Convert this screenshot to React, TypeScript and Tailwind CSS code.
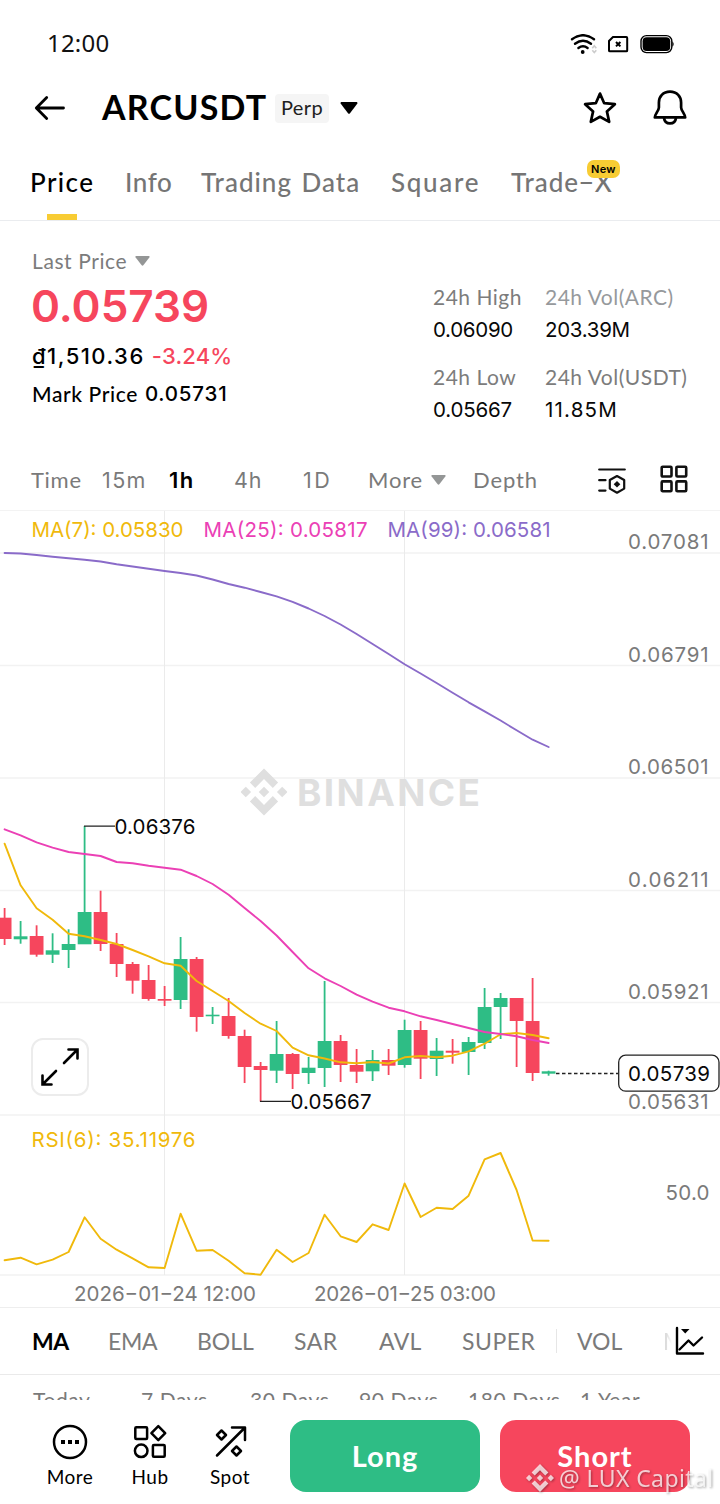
import type { ReactNode } from "react";

const LATO = "font-['Lato','Open_Sans',sans-serif]";
const INTER = "font-['Inter','Roboto',sans-serif]";

const GREEN = "#2ebd85";
const RED = "#f6465d";
const YELLOW = "#f0b90b";
const PINK = "#eb40b5";
const PURPLE = "#8a6bc9";

// [high, low, body top, body bottom, up]
const CANDLES: [number, number, number, number, boolean][] = [
  [908, 945, 917.7, 939, false],
  [921, 943.7, 936.3, 939.3, true],
  [925.3, 956.7, 936, 954.7, false],
  [933.3, 963, 950.3, 954.7, true],
  [929.3, 968, 944, 950, true],
  [826, 944, 912, 944.3, true],
  [890.7, 951, 912, 944, false],
  [933, 977, 944, 964, false],
  [962, 993.7, 964, 980.7, false],
  [965, 1000.7, 980, 999, false],
  [986, 1006, 999, 1000.7, false],
  [937, 1009, 959, 1000, true],
  [957, 1031.7, 959, 1017, false],
  [1007, 1024, 1014.7, 1016.3, true],
  [998, 1038.7, 1016, 1036, false],
  [1029.7, 1083, 1036, 1067, false],
  [1062, 1101.5, 1066, 1070, false],
  [1021, 1083, 1054, 1070.7, true],
  [1053, 1089, 1054, 1074, false],
  [1057, 1084, 1067.7, 1073, true],
  [981, 1087, 1041, 1068, true],
  [1035, 1082, 1041, 1065, false],
  [1049, 1083, 1065, 1071.7, false],
  [1050, 1081, 1060, 1071.3, true],
  [1049, 1075, 1060, 1065.7, false],
  [1019.7, 1067.7, 1030, 1065, true],
  [1021, 1079, 1030, 1058.7, false],
  [1038, 1076, 1050.7, 1059, true],
  [1039, 1063.7, 1050.7, 1052.7, false],
  [1037, 1075, 1042, 1052, true],
  [988, 1049, 1007, 1043, true],
  [993, 1039, 998, 1007, true],
  [998, 1067, 998, 1021, false],
  [978, 1081, 1021, 1073, false],
  [1070.7, 1075.7, 1071.3, 1073.7, true],
];

const MA7 = [
  843.7, 885.3, 908.3, 919.7, 933.7, 936.3, 940, 944, 950, 956.3, 963.3, 965.7,
  981, 991, 1001, 1013, 1023.7, 1031, 1047.7, 1055.3, 1058.5, 1062.3, 1063.3,
  1062, 1063.5, 1057.3, 1056, 1057.3, 1055.7, 1051.3, 1043.7, 1034.3, 1033,
  1035, 1038.3,
];

const MA25 = [
  829.3, 835.3, 842.3, 847.7, 852, 854, 856, 862, 863.3, 865.7, 867.7, 869.7,
  876, 884, 894.7, 908, 921, 935.5, 952, 968.3, 978.3, 986, 994.7, 1001.7,
  1007.7, 1011.3, 1016.3, 1020, 1024, 1028, 1032, 1034, 1036.3, 1040, 1043,
];

const MA99 = [
  553, 553.5, 555, 556.7, 558.3, 559.8, 561.5, 564.2, 566.5, 568.7, 571, 573,
  575.5, 579.5, 584, 587.7, 592, 596.3, 601.8, 608.5, 616, 624.5, 634, 644,
  654, 664.2, 673.5, 683, 692.7, 702.3, 711.3, 720.5, 730.3, 739.7, 747,
];

const RSI = [
  1260.3, 1257.7, 1264.3, 1259.7, 1252, 1217.3, 1238.7, 1249.7, 1258.3, 1267.3,
  1268, 1213.7, 1250.7, 1250, 1260.7, 1273.3, 1274.7, 1249.7, 1262, 1253,
  1214.7, 1236.3, 1242, 1224.3, 1230, 1183.5, 1217, 1207.7, 1209, 1195.7,
  1159.3, 1153, 1190, 1240.5, 1240.7,
];

const GRID_Y = [553, 665.5, 778, 890.5, 1002.5, 1115, 1275];

const PRICES = [
  { y: 549, value: "0.07081" },
  { y: 661.5, value: "0.06791" },
  { y: 774, value: "0.06501" },
  { y: 886.5, value: "0.06211" },
  { y: 999, value: "0.05921" },
  { y: 1109, value: "0.05631" },
];

const candleX = (i: number) => 4.6 + i * 16;
const toPoints = (values: number[]) =>
  values.map((y, i) => `${candleX(i)},${y}`).join(" ");

const BinanceMark = ({ className = "" }: { className?: string }) => (
  <svg viewBox="0 0 48 48" className={className} fill="currentColor">
    <path d="M24 0 38.4 14.4 33 19.8 24 10.8 15 19.8 9.6 14.4Z" />
    <path d="M24 48 38.4 33.6 33 28.2 24 37.2 15 28.2 9.6 33.6Z" />
    <path d="M24 18.6 29.4 24 24 29.4 18.6 24Z" />
    <path d="M5.4 18.6 10.8 24 5.4 29.4 0 24Z" />
    <path d="M42.6 18.6 48 24 42.6 29.4 37.2 24Z" />
  </svg>
);

const Caret = ({ className = "" }: { className?: string }) => (
  <svg viewBox="0 0 18 12" className={className} fill="currentColor">
    <path d="M1.2 0H16.8Q18 .6 17.2 1.8L10 11.2Q9 12.2 8 11.2L.8 1.8Q0 .6 1.2 0Z" />
  </svg>
);

const StatusBar = () => (
  <div className="flex h-[76px] items-center justify-between pt-3 pr-[46px] pl-[47px]">
    <span className="-mt-0.5 font-['Noto_Sans','Open_Sans',sans-serif] text-[24px] tracking-[0.2px] text-[#111]">
      12:00
    </span>
    <svg width="104" height="20" viewBox="570 34 104 20" fill="none">
      <g stroke="#000" strokeWidth="2.4" strokeLinecap="round">
        <path d="M572 39.2Q583 31.2 594 39.2" />
        <path d="M575 43.7Q583 37.6 591 43.7" />
        <path d="M578.4 48Q583 44.6 587.6 48" />
      </g>
      <circle cx="582.7" cy="52" r="1.9" fill="#000" />
      <path
        d="M592.3 48.2 594.3 45.8 596.3 48.2M592.3 50.2 594.3 52.6 596.3 50.2"
        stroke="#ccc"
        strokeWidth="1.6"
      />
      <path
        d="M613 37H626.3Q627.2 37 627.2 38V50.4Q627.2 51.3 626.3 51.3H610Q609 51.3 609 50.4V41Z"
        stroke="#000"
        strokeWidth="2"
      />
      <path d="M616 42 620.4 46.4M620.4 42 616 46.4" stroke="#000" strokeWidth="2" />
      <rect x="641" y="35.6" width="30.8" height="17" rx="5.5" stroke="#000" strokeWidth="1.4" />
      <rect x="642.6" y="37.2" width="27.6" height="13.8" rx="4" fill="#000" />
      <path d="M672.4 41.2Q675 44 672.4 46.8Z" fill="#000" />
    </svg>
  </div>
);

const Header = () => (
  <div className="flex h-16 items-center pr-8 pl-[34px]">
    <svg width="32" height="26" viewBox="0 0 32 26" fill="none" stroke="#000" strokeWidth="2.8" strokeLinecap="round" strokeLinejoin="round">
      <path d="M29.5 13H2.5M12.7 2.5 2.3 13 12.7 23.5" />
    </svg>
    <h1 className={`${LATO} -mt-0.5 ml-[36px] w-[173px] text-[34px] leading-none font-bold tracking-[1.2px] text-black`}>
      ARCUSDT
    </h1>
    <span className={`${LATO} flex h-[29px] w-[54px] items-center justify-center rounded bg-[#f5f5f5] pb-0.5 text-[20px] tracking-[0.4px] text-[#202020]`}>
      Perp
    </span>
    <Caret className="ml-[11px] h-3 w-[18px] text-black" />
    <div className="flex-1" />
    <svg width="36" height="36" viewBox="0 0 36 36" fill="none" stroke="#000" strokeWidth="2.7" strokeLinejoin="round">
      <path d="M18 3.6 22.2 13.2 32.9 14.2 24.9 21.4 27.2 31.9 18 26.8 8.8 31.9 11.1 21.4 3.1 14.2 13.8 13.2Z" />
    </svg>
    <svg className="ml-[34px]" width="36" height="36" viewBox="0 0 36 36" fill="none" stroke="#000" strokeWidth="2.7" strokeLinejoin="round">
      <path d="M18 1.6C11 1.6 6.9 6.8 6.9 12.5V17.4C6.9 20.5 2.8 24.3 2.8 27.4H33.2C33.2 24.3 29.1 20.5 29.1 17.4V12.5C29.1 6.8 25 1.6 18 1.6Z" />
      <path d="M12 28C12.4 31.2 14.8 33.4 18 33.4S23.6 31.2 24 28" />
    </svg>
  </div>
);

const Tabs = () => (
  <nav className={`${LATO} flex h-[81px] border-b border-[#eaecef] pl-[30px] text-[26px] leading-[84px] font-medium whitespace-nowrap text-[#757575]`}>
    <div className="relative w-[95px] tracking-[1.4px] text-black">
      Price
      <span className="absolute bottom-0 left-[17px] h-1.5 w-[30px] bg-[#f8cc33]" />
    </div>
    <div className="w-[76px] tracking-[0.6px]">Info</div>
    <div className="w-[190px] tracking-[1px] [word-spacing:2px]">Trading Data</div>
    <div className="w-[120px] tracking-[1.7px]">Square</div>
    <div className="relative tracking-[0.9px]">
      Trade−X
      <span className={`${INTER} absolute top-[20px] left-[76px] h-[18px] w-[33px] rounded-[7px] bg-[#f8cc33] text-center text-[11px] leading-[18px] font-semibold tracking-[0.3px] text-black`}>
        New
      </span>
    </div>
  </nav>
);

const Stat = ({ label, children, muted = false }: { label: ReactNode; children: ReactNode; muted?: boolean }) => (
  <div className="flex h-20 flex-col whitespace-nowrap">
    <span className={`${LATO} -mt-px h-[33px] text-[21px] leading-8 tracking-[0.5px] ${muted ? "text-[#96999c]" : "text-[#7c7c7c]"}`}>
      {label}
    </span>
    <span className={`${INTER} text-[20.5px] leading-8 text-[#080808]`}>{children}</span>
  </div>
);

const Summary = () => (
  <section className="flex h-[229px] justify-between pr-8 pl-8">
    <div className="flex flex-col whitespace-nowrap">
      <div className={`${LATO} mt-6 flex h-8 items-center text-[21px] tracking-[0.6px] text-[#7c7c7c]`}>
        Last Price
        <Caret className="ml-2 h-2.5 w-[15px] text-[#949696]" />
      </div>
      <div className={`${INTER} -ml-px h-[60px] text-[44px] leading-[59px] font-semibold text-[#f6465d]`}>
        0.05739
      </div>
      <div className={`${INTER} flex h-[38px] items-center gap-[7px] text-[22px] font-medium text-black`}>
        <span className="tracking-[1.5px]">₫1,510.36</span>
        <span className="tracking-[0.2px] text-[#f6465d]">-3.24%</span>
      </div>
      <div className="flex h-[38px] items-center gap-[7px] text-[20.5px] font-medium text-black">
        <span className={`${LATO} text-[21px] tracking-[0.6px]`}>Mark Price</span>
        <span className={`${INTER} tracking-[0.8px]`}>0.05731</span>
      </div>
    </div>
    <div className="grid grid-cols-[112px_143px] content-start pt-[61px]">
      <Stat label="24h High">
        <span className="tracking-[-0.3px]">0.06090</span>
      </Stat>
      <Stat label="24h Vol(ARC)" muted>
        <span className="tracking-[-0.3px]">203.39M</span>
      </Stat>
      <Stat label="24h Low">
        <span className="tracking-[-0.2px]">0.05667</span>
      </Stat>
      <Stat label="24h Vol(USDT)">
        <span className="tracking-[1.2px]">11.85M</span>
      </Stat>
    </div>
  </section>
);

const Intervals = () => (
  <div className={`${LATO} flex h-[61px] items-center border-b border-[#f3f3f3] pl-[31px] text-[22px] whitespace-nowrap text-[#7a7a7a]`}>
    <span className="-mt-0.5 w-[71px] tracking-[0.7px]">Time</span>
    <span className={`${INTER} w-[67px] text-[21.5px] tracking-[1.4px]`}>15m</span>
    <span className={`${INTER} w-[65px] text-[22px] font-semibold tracking-[1.4px] text-black`}>1h</span>
    <span className={`${INTER} w-[69px] text-[21.5px] tracking-[0.8px]`}>4h</span>
    <span className={`${INTER} w-[65px] text-[21.5px] tracking-[2.4px]`}>1D</span>
    <span className="-mt-0.5 w-[63px] tracking-[0.8px]">More</span>
    <Caret className="h-2.5 w-[15px] text-[#949696]" />
    <span className="-mt-0.5 ml-[27px] w-[123px] tracking-[0.9px]">Depth</span>
    <svg width="32" height="32" viewBox="0 0 32 32" fill="none" stroke="#111" strokeWidth="2.2" strokeLinecap="round">
      <path d="M3.2 5.5H28.8M3.2 16.2H9.5M3.2 26.6H9.5" />
      <path d="M21 12 28.2 16V24.6L21 28.7 13.8 24.6V16Z" strokeLinejoin="round" />
      <path d="M21 17 24.3 20.3 21 23.6 17.7 20.3Z" fill="#111" stroke="none" />
    </svg>
    <svg className="-mt-0.5 ml-[30px]" width="32" height="32" viewBox="0 0 32 32" fill="none" stroke="#111" strokeWidth="2.6">
      <rect x="3.7" y="3.7" width="9.8" height="9.8" rx="1" />
      <rect x="18.4" y="3.7" width="9.8" height="9.8" rx="1" />
      <rect x="3.7" y="18.4" width="9.8" height="9.8" rx="1" />
      <rect x="18.4" y="18.4" width="9.8" height="9.8" rx="1" />
    </svg>
  </div>
);

const PriceChart = () => (
  <div className={`${INTER} relative h-[797px] border-b border-[#eee]`}>
    <svg width="720" height="796" viewBox="0 511 720 796" fill="none" className="block text-[20.5px]">
      {GRID_Y.map((y) => (
        <path key={y} d={`M0 ${y}H720`} stroke="#f2f2f2" strokeWidth="1.5" />
      ))}
      <path d="M164.5 511V1275M404.5 511V1275" stroke="#ebebeb" />

      <svg x="240.5" y="768" width="47" height="48" className="text-[#dfdfdf]">
        <BinanceMark className="h-12 w-[47px]" />
      </svg>
      <text x="297" y="805.5" fontSize="37" fontWeight="700" textLength="183" fill="#dfdfdf">
        BINANCE
      </text>

      {CANDLES.map(([high, low, top, bottom, up], i) => (
        <g key={i} fill={up ? GREEN : RED}>
          <rect x={candleX(i) - 0.9} y={high} width="1.8" height={low - high} />
          <rect x={candleX(i) - 6.9} y={top} width="13.8" height={bottom - top} />
        </g>
      ))}

      <g strokeWidth="1.9" strokeLinejoin="round" strokeLinecap="round">
        <polyline points={toPoints(MA99)} stroke={PURPLE} />
        <polyline points={toPoints(MA7)} stroke={YELLOW} />
        <polyline points={toPoints(MA25)} stroke={PINK} />
        <polyline points={toPoints(RSI)} stroke={YELLOW} />
      </g>

      <text x="31.5" y="537" fill={YELLOW} textLength="152">MA(7): 0.05830</text>
      <text x="203.5" y="537" fill={PINK} textLength="164">MA(25): 0.05817</text>
      <text x="387.5" y="537" fill={PURPLE} textLength="163">MA(99): 0.06581</text>
      <text x="31.5" y="1147" fill={YELLOW} textLength="164">RSI(6): 35.11976</text>

      <g fill="#7a7a7a">
        {PRICES.map(({ y, value }) => (
          <text key={value} x="628" y={y} textLength="80.5">{value}</text>
        ))}
        <text x="665.5" y="1200" textLength="44">50.0</text>
        <text x="74" y="1301" textLength="182">2026−01−24 12:00</text>
        <text x="314" y="1301" textLength="182">2026−01−25 03:00</text>
      </g>

      <path d="M84 826.2H115M260 1101.4H291" stroke="#222" strokeWidth="1.3" />
      <text x="114.5" y="833.5" fill="#080808" textLength="81">0.06376</text>
      <text x="290.5" y="1108.5" fill="#080808" textLength="81">0.05667</text>

      <path d="M556 1073.5H618" stroke="#222" strokeWidth="1.3" strokeDasharray="3.5 2.5" />
      <rect x="618.7" y="1055.2" width="100.3" height="36" rx="7" fill="#fff" stroke="#222" strokeWidth="1.3" />
      <text x="628" y="1080.5" fill="#080808" textLength="82">0.05739</text>
    </svg>

    <button className="absolute top-[527px] left-[31px] flex h-[58px] w-[58px] items-center justify-center rounded-xl border-2 border-[#ececec] bg-white">
      <svg width="40" height="40" viewBox="0 0 40 40" fill="none" stroke="#000" strokeWidth="2.6" strokeLinecap="round">
        <path d="M24 16 37 3M28.5 2.5H37.5V11.5" />
        <path d="M16 24 3 37M11.5 37.5H2.5V28.5" />
      </svg>
    </button>
  </div>
);

const Indicators = () => (
  <div className={`${LATO} flex h-[67px] items-center border-b border-[#eaeaea] pl-8 text-[23px] whitespace-nowrap text-[#7a7a7a]`}>
    <span className="w-[76px] font-bold tracking-[-0.6px] text-black">MA</span>
    <span className="w-[89px] tracking-[-0.3px]">EMA</span>
    <span className="w-[97px]">BOLL</span>
    <span className="w-[85px] tracking-[0.5px]">SAR</span>
    <span className="w-[83px] tracking-[0.3px]">AVL</span>
    <span className="w-[94px] tracking-[0.5px]">SUPER</span>
    <span className="h-6 w-[21px] border-l border-[#e6e6e6]" />
    <span className="w-[86px]">VOL</span>
    <span className="w-[9px] overflow-hidden bg-gradient-to-r from-[#c8c8c8] to-white bg-clip-text text-transparent">M</span>
    <svg className="ml-[2px]" width="32" height="32" viewBox="0 0 32 32" fill="none" stroke="#000" strokeWidth="2.4" strokeLinecap="round" strokeLinejoin="round">
      <path d="M3 3V28.5H29" />
      <path d="M5.5 24.5 14.5 15.5 19.5 20.5 28 12.5" />
      <path d="M7 4H15.5L11.2 8.6Z" fill="#000" stroke="none" />
    </svg>
  </div>
);

const Performance = () => (
  <div className={`${LATO} flex h-[25px] overflow-hidden pt-[9px] pl-[33px] text-[21px] leading-8 tracking-[0.6px] whitespace-nowrap text-[#7a7a7a]`}>
    <span className="w-[108px]">Today</span>
    <span className="w-[109px]">7 Days</span>
    <span className="w-[109px]">30 Days</span>
    <span className="w-[109px]">90 Days</span>
    <span className="w-[112px]">180 Days</span>
    <span>1 Year</span>
  </div>
);

const NavItem = ({ label, children }: { label: string; children: ReactNode }) => (
  <div className="flex w-20 flex-col items-center">
    <svg width="40" height="40" viewBox="0 0 40 40" fill="none" stroke="#000" strokeWidth="2.5" strokeLinejoin="round">
      {children}
    </svg>
    <span className={`${LATO} text-[19px] leading-[30px] tracking-[0.5px] text-black`}>{label}</span>
  </div>
);

const BottomBar = () => (
  <footer className="relative flex h-[104px] bg-white pl-[30px]">
    <div className="flex pt-[22px]">
      <NavItem label="More">
        <circle cx="20" cy="20" r="16" />
        <path d="M11 20H15M18 20H22M25 20H29" strokeWidth="4" />
      </NavItem>
      <NavItem label="Hub">
        <rect x="5.3" y="5.3" width="11.8" height="11.8" rx="1" />
        <path d="M28.3 4.2 35.2 11.2 28.3 18.2 21.4 11.2Z" />
        <circle cx="11.2" cy="28.8" r="6.3" />
        <rect x="22.9" y="22.9" width="11.8" height="11.8" rx="1" />
      </NavItem>
      <NavItem label="Spot">
        <path d="M7 33.5 34 6.5M22 5.5H35V18" strokeLinecap="round" />
        <path d="M11.5 8.5 16 13 11.5 17.5 7 13ZM26.5 24.5 31 29 26.5 33.5 22 29Z" />
      </NavItem>
    </div>
    <div className={`${LATO} ml-5 flex gap-5 pt-5 text-[29px] font-bold tracking-[1px] text-white`}>
      <button className="h-[72px] w-[190px] rounded-2xl bg-[#2ebd85]">Long</button>
      <button className="h-[72px] w-[190px] rounded-2xl bg-[#f6465d]">Short</button>
    </div>
    <div className="absolute top-[64px] left-[526px] flex items-center text-white/75 [filter:drop-shadow(1px_1px_1px_rgba(0,0,0,0.45))]">
      <BinanceMark className="h-7 w-7" />
      <span className="ml-[5px] font-['Noto_Sans',sans-serif] text-[23px] leading-7 tracking-[0.4px] whitespace-nowrap">@ LUX Capital</span>
    </div>
  </footer>
);

export default function App() {
  return (
    <main className="h-[1504px] w-[720px] overflow-hidden bg-white">
      <StatusBar />
      <Header />
      <Tabs />
      <Summary />
      <Intervals />
      <PriceChart />
      <Indicators />
      <Performance />
      <BottomBar />
    </main>
  );
}
